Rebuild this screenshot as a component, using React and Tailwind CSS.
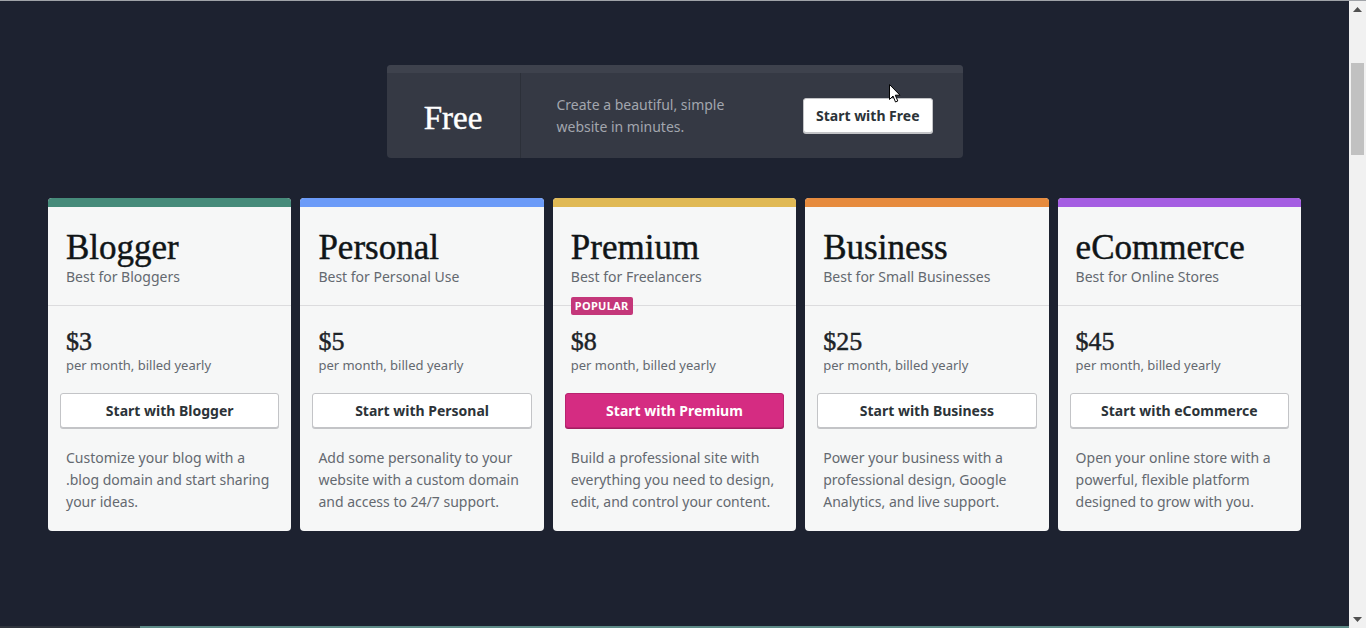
import React from 'react';

const plans = [
  {
    name: 'Blogger',
    tagline: 'Best for Bloggers',
    price: '$3',
    cta: 'Start with Blogger',
    stripe: 'bg-[#468b7a]',
    text: 'Customize your blog with a .blog domain and start sharing your ideas.',
  },
  {
    name: 'Personal',
    tagline: 'Best for Personal Use',
    price: '$5',
    cta: 'Start with Personal',
    stripe: 'bg-[#6b9bf8]',
    text: 'Add some personality to your website with a custom domain and access to 24/7 support.',
  },
  {
    name: 'Premium',
    tagline: 'Best for Freelancers',
    price: '$8',
    cta: 'Start with Premium',
    stripe: 'bg-[#e0b955]',
    text: 'Build a professional site with everything you need to design, edit, and control your content.',
    popular: true,
  },
  {
    name: 'Business',
    tagline: 'Best for Small Businesses',
    price: '$25',
    cta: 'Start with Business',
    stripe: 'bg-[#e68b3e]',
    text: 'Power your business with a professional design, Google Analytics, and live support.',
  },
  {
    name: 'eCommerce',
    tagline: 'Best for Online Stores',
    price: '$45',
    cta: 'Start with eCommerce',
    stripe: 'bg-[#a55ee2]',
    text: 'Open your online store with a powerful, flexible platform designed to grow with you.',
  },
];

const serif = "font-['Liberation_Serif',serif] [-webkit-text-stroke:0.45px]";

const PlanCard = ({ plan }) => (
  <div className="bg-[#f6f7f7] rounded-[4px] overflow-hidden flex flex-col">
    <div className={`h-[9px] ${plan.stripe}`}></div>
    <div className="px-[18px] pt-[21px] pb-[18px] border-b border-[#dcdcde] relative">
      <h2 className={`${serif} text-[35px] leading-[39px] text-[#101517]`}>{plan.name}</h2>
      <p className="text-[14px] leading-[20px] text-[#646970]">{plan.tagline}</p>
      {plan.popular && (
        <span className="absolute left-[18px] bottom-[-10px] h-[18px] px-[4px] rounded-[2px] bg-[#c4377a] text-white text-[11px] leading-[18px] font-bold tracking-[0.3px]">
          POPULAR
        </span>
      )}
    </div>
    <div className="px-[12px] pt-[20px] pb-[18px]">
      <div className="px-[6px]">
        <div className={`${serif} text-[26px] leading-[32px] text-[#1d2327]`}>{plan.price}</div>
        <div className="text-[13px] leading-[15px] text-[#646970]">per month, billed yearly</div>
      </div>
      {plan.popular ? (
        <button className="mt-[20px] w-full h-[35px] rounded-[3px] bg-[#d52c82] border border-[#b8246f] shadow-[0_1px_0_#a11f61] text-white text-[14px] font-bold">
          {plan.cta}
        </button>
      ) : (
        <button className="mt-[20px] w-full h-[35px] rounded-[3px] bg-white border border-[#c3c4c7] shadow-[0_1px_0_#c3c4c7] text-[#2c3338] text-[14px] font-bold">
          {plan.cta}
        </button>
      )}
      <p className="mt-[19px] px-[6px] text-[14px] leading-[22px] text-[#646970]">{plan.text}</p>
    </div>
  </div>
);

const Scrollbar = () => (
  <div className="w-[17px] bg-[#f1f1f1] flex flex-col items-center">
    <div className="h-[17px] flex items-center justify-center">
      <svg width="9" height="5" viewBox="0 0 9 5"><path d="M0 5 L4.5 0 L9 5 Z" fill="#505050" /></svg>
    </div>
    <div className="mt-[45px] w-[13px] h-[92px] bg-[#c1c1c1]"></div>
    <div className="flex-1"></div>
    <div className="h-[17px] flex items-center justify-center">
      <svg width="9" height="5" viewBox="0 0 9 5"><path d="M0 0 L4.5 5 L9 0 Z" fill="#505050" /></svg>
    </div>
  </div>
);

export default function App() {
  return (
    <div className="w-[1366px] h-[628px] overflow-hidden flex bg-[#1d2230] font-['Noto_Sans',sans-serif] border-t border-[#a0a3a8]">
      <div className="flex-1 flex flex-col">
        <div className="flex-1 pt-[64px]">
          <div className="mx-auto w-[576px] rounded-[4px] overflow-hidden bg-[#353944] relative">
            <div className="h-[8px] bg-[#3e424d]"></div>
            <div className="h-[85px] flex items-center">
              <div className="w-[134px] h-full border-r border-[#2c3039] flex items-center justify-center">
                <span className={`${serif} mt-[4px] text-[33px] leading-[40px] text-white`}>Free</span>
              </div>
              <p className="ml-[36px] mt-[1px] w-[200px] text-[14px] leading-[22px] text-[#a2a6ae]">
                Create a beautiful, simple website in minutes.
              </p>
              <button className="ml-auto mr-[30px] h-[35px] px-[12px] rounded-[3px] bg-white border border-[#c3c4c7] shadow-[0_1px_0_#c3c4c7] text-[#2c3338] text-[14px] font-bold">
                Start with Free
              </button>
            </div>
            <svg className="absolute left-[502px] top-[19px]" width="12" height="19" viewBox="0 0 12 19">
              <path d="M0.5 0.5 L0.5 15.5 L4 12 L6.5 18 L8.8 17 L6.3 11.2 L11 11.2 Z" fill="#ffffff" stroke="#000000" strokeWidth="1" />
            </svg>
          </div>
          <div className="mx-auto mt-[40px] w-[1253px] grid grid-cols-5 gap-[9px] items-start">
            {plans.map((plan) => (
              <PlanCard key={plan.name} plan={plan} />
            ))}
          </div>
        </div>
        <div className="h-[2px] flex">
          <div className="w-[140px] bg-[#2f343d]"></div>
          <div className="flex-1 bg-[#5d8b87]"></div>
        </div>
      </div>
      <Scrollbar />
    </div>
  );
}
